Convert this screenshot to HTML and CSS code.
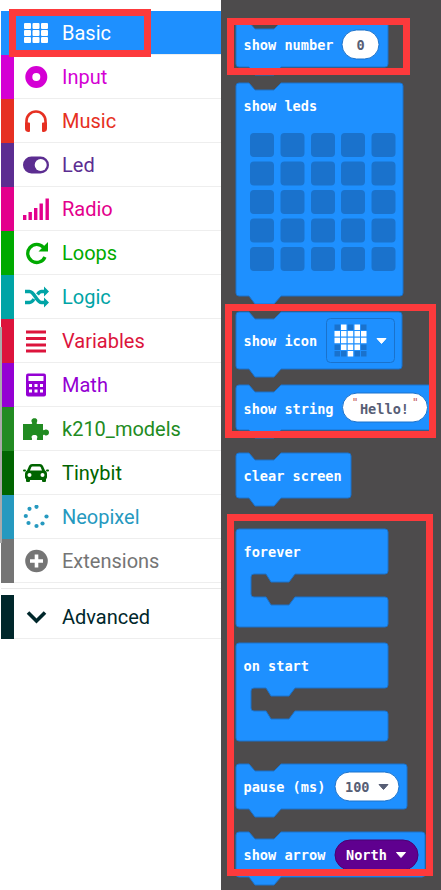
FILE: index.html
```html
<!DOCTYPE html>
<html lang="en">
<head>
    <meta charset="UTF-8">
    <title>Blocks</title>
    <link rel="stylesheet" href="styles.css">
</head>
<body>

<div class="toolbox">
    <div class="row row-basic">
        <span class="strip"></span>
        <div class="row-body">
            <svg class="icon" viewBox="0 0 28 24" fill="currentColor"><rect x="2" y="2" width="7" height="6" rx="1"/><rect x="10.5" y="2" width="7" height="6" rx="1"/><rect x="19" y="2" width="7" height="6" rx="1"/><rect x="2" y="9" width="7" height="6" rx="1"/><rect x="10.5" y="9" width="7" height="6" rx="1"/><rect x="19" y="9" width="7" height="6" rx="1"/><rect x="2" y="16" width="7" height="6" rx="1"/><rect x="10.5" y="16" width="7" height="6" rx="1"/><rect x="19" y="16" width="7" height="6" rx="1"/></svg>
            <span class="label">Basic</span>
        </div>
    </div>
    <div class="row row-input">
        <span class="strip"></span>
        <div class="row-body">
            <svg class="icon" viewBox="0 0 28 24"><circle cx="14.3" cy="12" r="7.5" fill="none" stroke="currentColor" stroke-width="7"/></svg>
            <span class="label">Input</span>
        </div>
    </div>
    <div class="row row-music">
        <span class="strip"></span>
        <div class="row-body">
            <svg class="icon" viewBox="0 0 28 24" fill="currentColor"><path d="M4.500 17v-5a9.500 9.500 0 0 1 19 0v5" fill="none" stroke="currentColor" stroke-width="2.600"/><path d="M3 13.500h4a1 1 0 0 1 1 1V22a1 1 0 0 1-1 1H6a3.500 3.500 0 0 1-3-3.500zM25 13.500h-4a1 1 0 0 0-1 1V22a1 1 0 0 0 1 1h1a3.500 3.500 0 0 0 3-3.500z"/></svg>
            <span class="label">Music</span>
        </div>
    </div>
    <div class="row row-led">
        <span class="strip"></span>
        <div class="row-body">
            <svg class="icon" viewBox="0 0 28 24"><rect x="1" y="3.500" width="26" height="17" rx="8.500" fill="currentColor"/><circle cx="18.700" cy="12" r="6" fill="#fff"/></svg>
            <span class="label">Led</span>
        </div>
    </div>
    <div class="row row-radio">
        <span class="strip"></span>
        <div class="row-body">
            <svg class="icon" viewBox="0 0 28 24" fill="currentColor"><rect x="1" y="18" width="3.400" height="5"/><rect x="6.500" y="15" width="3.400" height="8"/><rect x="12" y="11" width="3.400" height="12"/><rect x="17.500" y="6.500" width="3.400" height="16.500"/><rect x="23.500" y="1.500" width="3.400" height="21.500"/></svg>
            <span class="label">Radio</span>
        </div>
    </div>
    <div class="row row-loops">
        <span class="strip"></span>
        <div class="row-body">
            <svg class="icon" viewBox="0 0 28 24" fill="currentColor"><path d="M21.500 6.500A9 9 0 1 0 23 16" fill="none" stroke="currentColor" stroke-width="3.300"/><path d="M26 1v9.500H16.500z"/></svg>
            <span class="label">Loops</span>
        </div>
    </div>
    <div class="row row-logic">
        <span class="strip"></span>
        <div class="row-body">
            <svg class="icon" viewBox="0 0 28 24" fill="currentColor"><path d="M3 6.500h4.500c5 0 7 11 12 11H23M3 17.500h4.500c2 0 3.500-1.800 4.500-3.500M15.500 9.500c1-1.500 2.300-3 4-3H23" fill="none" stroke="currentColor" stroke-width="3.400"/><path d="M22 1.500l5 5-5 5zM22 12.500l5 5-5 5z"/></svg>
            <span class="label">Logic</span>
        </div>
    </div>
    <div class="row row-variables">
        <span class="strip"></span>
        <div class="row-body">
            <svg class="icon" viewBox="0 0 28 24" fill="currentColor"><rect x="4" y="1.500" width="20" height="3"/><rect x="4" y="8" width="20" height="3"/><rect x="4" y="14.500" width="20" height="3"/><rect x="4" y="20.500" width="20" height="3"/></svg>
            <span class="label">Variables</span>
        </div>
    </div>
    <div class="row row-math">
        <span class="strip"></span>
        <div class="row-body">
            <svg class="icon" viewBox="0 0 28 24"><rect x="4" y="0.500" width="20" height="23" rx="2" fill="currentColor"/><rect x="6.500" y="3" width="15" height="5" fill="#fff"/><g fill="#fff"><rect x="7" y="11" width="3" height="3"/><rect x="12.500" y="11" width="3" height="3"/><rect x="18" y="11" width="3" height="3"/><rect x="7" y="16.500" width="3" height="3"/><rect x="12.500" y="16.500" width="3" height="3"/><rect x="18" y="16.500" width="3" height="3"/></g></svg>
            <span class="label">Math</span>
        </div>
    </div>
    <div class="row row-models">
        <span class="strip"></span>
        <div class="row-body">
            <svg class="icon" viewBox="0 0 28 24" fill="currentColor"><path d="M1 7h8.500c1 0 .8-1.200.2-2-.6-1-.4-3.800 2.800-3.800S15.500 4 15 5c-.5.800-.6 2 .3 2H21v5.500c0 1 1.200.8 2 .3 1-.6 4-.4 4 2.700s-3 3.300-4 2.700c-.8-.5-2-.7-2 .3V23h-5.500c-1 0-.8-1.200-.3-2 .5-1 .3-3-2.700-3s-3.200 2-2.700 3c.4.800.6 2-.3 2H1z"/></svg>
            <span class="label">k210_models</span>
        </div>
    </div>
    <div class="row row-tinybit">
        <span class="strip"></span>
        <div class="row-body">
            <svg class="icon" viewBox="0 0 28 24"><path d="M3 16v-3c0-2 1-3 2-3.500L7 5c.6-1.300 1.800-2 3-2h8c1.200 0 2.400.7 3 2l2 4.500c1 .5 2 1.500 2 3.500v3c0 1-.5 1.700-1 2v2a1 1 0 0 1-1 1h-2a1 1 0 0 1-1-1v-1H8v1a1 1 0 0 1-1 1H5a1 1 0 0 1-1-1v-2c-.5-.3-1-1-1-2z" fill="currentColor"/><path d="M8 9.500l1.400-3.500c.2-.4.500-.6 1-.6h7.200c.5 0 .8.200 1 .6L20 9.500z" fill="#fff"/><circle cx="7.500" cy="14" r="2" fill="#fff"/><circle cx="20.500" cy="14" r="2" fill="#fff"/><rect x="1" y="8.500" width="3" height="2" rx="1" fill="currentColor"/><rect x="24" y="8.500" width="3" height="2" rx="1" fill="currentColor"/></svg>
            <span class="label">Tinybit</span>
        </div>
    </div>
    <div class="row row-neopixel">
        <span class="strip"></span>
        <div class="row-body">
            <svg class="icon" viewBox="0 0 28 24" fill="currentColor"><circle cx="14.500" cy="1.800" r="2.100"/><circle cx="7.500" cy="3.800" r="2.100"/><circle cx="3.800" cy="11" r="2.100"/><circle cx="6.500" cy="18" r="2.100"/><circle cx="14.500" cy="21" r="2.100"/><circle cx="20.500" cy="18.500" r="2.100"/><circle cx="24.500" cy="11.500" r="2.100"/></svg>
            <span class="label">Neopixel</span>
        </div>
    </div>
    <div class="row row-extensions">
        <span class="strip"></span>
        <div class="row-body">
            <svg class="icon" viewBox="0 0 28 24"><circle cx="14.500" cy="12" r="11.300" fill="currentColor"/><path d="M14.500 5.500v13M8 12h13" stroke="#fff" stroke-width="3.600"/></svg>
            <span class="label">Extensions</span>
        </div>
    </div>
    <div class="divider"></div>
    <div class="row row-advanced">
        <span class="strip"></span>
        <div class="row-body">
            <svg class="icon" viewBox="0 0 28 24"><path d="M6 7.500l8.500 8.500L23 7.500" fill="none" stroke="currentColor" stroke-width="3.600"/></svg>
            <span class="label">Advanced</span>
        </div>
    </div>
</div>

<div class="flyout">
    <svg class="block" width="152" height="53">
        <path class="shape" d="M0 3a3 3 0 0 1 3-3H13l6 7H38l7-7H149a3 3 0 0 1 3 3V42a3 3 0 0 1-3 3H45l-7 8H19l-6-8H3a3 3 0 0 1-3-3z"/>
        <text class="word" x="7.500" y="28">show number</text>
        <rect class="field" x="106" y="8" width="37" height="29" rx="14.500"/>
        <text class="field-text" x="124.500" y="28" text-anchor="middle">0</text>
    </svg>

    <svg class="block" width="167" height="221">
        <path class="shape" d="M0 3a3 3 0 0 1 3-3H13l6 7H38l7-7H164a3 3 0 0 1 3 3V210a3 3 0 0 1-3 3H45l-7 8H19l-6-8H3a3 3 0 0 1-3-3z"/>
        <text class="word" x="7.500" y="27.500">show leds</text>
        <g class="led-off">
            <rect x="14" y="50" width="24" height="24" rx="4"/><rect x="44.500" y="50" width="24" height="24" rx="4"/><rect x="75" y="50" width="24" height="24" rx="4"/><rect x="105" y="50" width="24" height="24" rx="4"/><rect x="135.500" y="50" width="24" height="24" rx="4"/>
            <rect x="14" y="78.500" width="24" height="24" rx="4"/><rect x="44.500" y="78.500" width="24" height="24" rx="4"/><rect x="75" y="78.500" width="24" height="24" rx="4"/><rect x="105" y="78.500" width="24" height="24" rx="4"/><rect x="135.500" y="78.500" width="24" height="24" rx="4"/>
            <rect x="14" y="107" width="24" height="24" rx="4"/><rect x="44.500" y="107" width="24" height="24" rx="4"/><rect x="75" y="107" width="24" height="24" rx="4"/><rect x="105" y="107" width="24" height="24" rx="4"/><rect x="135.500" y="107" width="24" height="24" rx="4"/>
            <rect x="14" y="135.500" width="24" height="24" rx="4"/><rect x="44.500" y="135.500" width="24" height="24" rx="4"/><rect x="75" y="135.500" width="24" height="24" rx="4"/><rect x="105" y="135.500" width="24" height="24" rx="4"/><rect x="135.500" y="135.500" width="24" height="24" rx="4"/>
            <rect x="14" y="164" width="24" height="24" rx="4"/><rect x="44.500" y="164" width="24" height="24" rx="4"/><rect x="75" y="164" width="24" height="24" rx="4"/><rect x="105" y="164" width="24" height="24" rx="4"/><rect x="135.500" y="164" width="24" height="24" rx="4"/>
        </g>
    </svg>

    <svg class="block" width="166" height="65">
        <path class="shape" d="M0 3a3 3 0 0 1 3-3H13l6 7H38l7-7H163a3 3 0 0 1 3 3V54a3 3 0 0 1-3 3H45l-7 8H19l-6-8H3a3 3 0 0 1-3-3z"/>
        <text class="word" x="7.500" y="33.500">show icon</text>
        <rect class="icon-field" x="90.500" y="6.500" width="68" height="44" rx="4"/>
        <g class="mini-off">
            <rect x="98.500" y="12.500" width="5.500" height="5.500"/><rect x="111.700" y="12.500" width="5.500" height="5.500"/><rect x="125" y="12.500" width="5.500" height="5.500"/>
            <rect x="98.500" y="32.500" width="5.500" height="5.500"/><rect x="125" y="32.500" width="5.500" height="5.500"/>
            <rect x="98.500" y="39" width="5.500" height="5.500"/><rect x="105" y="39" width="5.500" height="5.500"/><rect x="118.500" y="39" width="5.500" height="5.500"/><rect x="125" y="39" width="5.500" height="5.500"/>
        </g>
        <g class="mini-on">
            <rect x="105" y="12.500" width="5.500" height="5.500"/><rect x="118.500" y="12.500" width="5.500" height="5.500"/>
            <rect x="98.500" y="19" width="5.500" height="5.500"/><rect x="105" y="19" width="5.500" height="5.500"/><rect x="111.700" y="19" width="5.500" height="5.500"/><rect x="118.500" y="19" width="5.500" height="5.500"/><rect x="125" y="19" width="5.500" height="5.500"/>
            <rect x="98.500" y="25.700" width="5.500" height="5.500"/><rect x="105" y="25.700" width="5.500" height="5.500"/><rect x="111.700" y="25.700" width="5.500" height="5.500"/><rect x="118.500" y="25.700" width="5.500" height="5.500"/><rect x="125" y="25.700" width="5.500" height="5.500"/>
            <rect x="105" y="32.500" width="5.500" height="5.500"/><rect x="111.700" y="32.500" width="5.500" height="5.500"/><rect x="118.500" y="32.500" width="5.500" height="5.500"/>
            <rect x="111.700" y="39" width="5.500" height="5.500"/>
        </g>
        <path class="arrow-white" d="M141 26.500h9l-4.500 5z"/>
    </svg>

    <svg class="block" width="196" height="53">
        <path class="shape" d="M0 3a3 3 0 0 1 3-3H13l6 7H38l7-7H193a3 3 0 0 1 3 3V42a3 3 0 0 1-3 3H45l-7 8H19l-6-8H3a3 3 0 0 1-3-3z"/>
        <text class="word" x="7.500" y="29">show string</text>
        <rect class="field" x="106.500" y="8" width="85" height="29" rx="14.500"/>
        <text class="quote" x="115.700" y="21">"</text>
        <text class="field-text" x="148.500" y="29" text-anchor="middle">Hello!</text>
        <text class="quote" x="176" y="21">"</text>
    </svg>

    <svg class="block block-spaced" width="115" height="53">
        <path class="shape" d="M0 3a3 3 0 0 1 3-3H13l6 7H38l7-7H112a3 3 0 0 1 3 3V42a3 3 0 0 1-3 3H45l-7 8H19l-6-8H3a3 3 0 0 1-3-3z"/>
        <text class="word" x="7.500" y="28">clear screen</text>
    </svg>

    <svg class="block block-group" width="152" height="98">
        <path class="shape" d="M0 3a3 3 0 0 1 3-3H149a3 3 0 0 1 3 3V42a3 3 0 0 1-3 3H59l-6 8H35l-5-8H18a3 3 0 0 0-3 3V65a3 3 0 0 0 3 3H30l5 8H53l6-8H149a3 3 0 0 1 3 3V95a3 3 0 0 1-3 3H3a3 3 0 0 1-3-3z"/>
        <text class="word" x="7.500" y="28">forever</text>
    </svg>

    <svg class="block block-hat" width="152" height="98">
        <path class="shape" d="M0 3a3 3 0 0 1 3-3H149a3 3 0 0 1 3 3V42a3 3 0 0 1-3 3H59l-6 8H35l-5-8H18a3 3 0 0 0-3 3V65a3 3 0 0 0 3 3H30l5 8H53l6-8H149a3 3 0 0 1 3 3V95a3 3 0 0 1-3 3H3a3 3 0 0 1-3-3z"/>
        <text class="word" x="7.500" y="28">on start</text>
    </svg>

    <svg class="block block-group" width="171" height="53">
        <path class="shape" d="M0 3a3 3 0 0 1 3-3H13l6 7H38l7-7H168a3 3 0 0 1 3 3V42a3 3 0 0 1-3 3H45l-7 8H19l-6-8H3a3 3 0 0 1-3-3z"/>
        <text class="word" x="7.500" y="28">pause (ms)</text>
        <rect class="field" x="99" y="8" width="64" height="29" rx="14.500"/>
        <text class="field-text" x="109" y="28">100</text>
        <path class="arrow-dark" d="M143 20.500h9l-4.500 5z"/>
    </svg>

    <svg class="block block-spaced" width="189" height="53">
        <path class="shape" d="M0 3a3 3 0 0 1 3-3H13l6 7H38l7-7H186a3 3 0 0 1 3 3V42a3 3 0 0 1-3 3H45l-7 8H19l-6-8H3a3 3 0 0 1-3-3z"/>
        <text class="word" x="7.500" y="28">show arrow</text>
        <rect class="field-purple" x="99" y="8" width="83" height="30" rx="15"/>
        <text class="word" x="110" y="28">North</text>
        <path class="arrow-white" d="M160.500 20.500h9l-4.500 5z"/>
    </svg>
</div>

<!-- red marks and the grey edge drawn over the screenshot -->
<div class="edge"></div>
<div class="mark mark-basic"></div>
<div class="mark mark-number"></div>
<div class="mark mark-show"></div>
<div class="mark mark-loops"></div>

</body>
</html>
```

FILE: styles.css
```css
html, body {
    margin: 0;
    padding: 0;
}
body {
    display: flex;
    width: 441px;
    height: 890px;
    overflow: hidden;
    position: relative;
    background: #fff;
    font-family: Roboto, Arial, sans-serif;
}

/* toolbox */
.toolbox {
    width: 220px;
    margin-left: 1px;
    padding-top: 11px;
    flex-shrink: 0;
    box-sizing: border-box;
}
.row {
    display: flex;
    height: 44px;
}
.strip {
    width: 13px;
    background: currentColor;
    flex-shrink: 0;
}
.row-body {
    flex: 1;
    display: flex;
    align-items: center;
    gap: 12px;
    padding-left: 8px;
    border-bottom: 1px solid #eee;
}
.icon {
    width: 28px;
    height: 24px;
    flex-shrink: 0;
}
.label {
    font-size: 20px;
}
.divider {
    height: 1px;
    margin: 5px 0 6px;
    background: #e8e8e8;
}
.row-basic { color: #1e90ff; }
.row-basic .row-body {
    background: #1e90ff;
    color: #fff;
}
.row-input { color: #d400d4; }
.row-music { color: #e63022; }
.row-led { color: #5c2d91; }
.row-radio { color: #e3008c; }
.row-loops { color: #00aa00; }
.row-logic { color: #00a4a6; }
.row-variables { color: #dc143c; }
.row-math { color: #9400d3; }
.row-models { color: #228b22; }
.row-tinybit { color: #006400; }
.row-neopixel { color: #2699bf; }
.row-extensions { color: #757575; }
.row-advanced { color: #00272b; }

.edge {
    position: absolute;
    left: 0;
    top: 327px;
    width: 2px;
    height: 216px;
    background: #aaa;
}

/* flyout */
.flyout {
    flex: 1;
    display: flex;
    flex-direction: column;
    align-items: flex-start;
    gap: 8px;
    padding: 22px 0 0 15px;
    background: #4d4b4c;
}
.block {
    display: block;
    overflow: visible;
    flex-shrink: 0;
}
.block-spaced { margin-top: 7px; }
.block-group { margin-top: 15px; }
.block-hat { margin-top: 8px; }
.shape {
    fill: #1e90ff;
    stroke: #1a72cc;
    stroke-width: 1;
    stroke-linejoin: round;
}
.word, .field-text {
    font-family: "DejaVu Sans Mono", monospace;
    font-size: 13.6px;
    font-weight: bold;
}
.word { fill: #fff; }
.field-text { fill: #575e75; }
.quote {
    font-family: "DejaVu Sans Mono", monospace;
    font-size: 11px;
    fill: #c05050;
}
.field {
    fill: #fff;
    stroke: #1a72cc;
    stroke-width: 1;
}
.field-purple {
    fill: #5f008f;
    stroke: #4c0072;
    stroke-width: 1;
}
.icon-field {
    fill: #1e90ff;
    stroke: #1a72cc;
    stroke-width: 1;
}
.led-off rect { fill: #1a72cc; }
.mini-off rect { fill: #1a72cc; }
.mini-on rect { fill: #fff; }
.arrow-white {
    fill: #fff;
    stroke: #fff;
    stroke-linejoin: round;
}
.arrow-dark {
    fill: #575e75;
    stroke: #575e75;
    stroke-linejoin: round;
}

/* red marks */
.mark {
    position: absolute;
    box-sizing: border-box;
    border: 7px solid #fd3a3c;
}
.mark-basic { left: 9px; top: 9px; width: 142px; height: 48px; }
.mark-number { left: 227px; top: 18px; width: 183px; height: 57px; }
.mark-show { left: 225px; top: 304px; width: 211px; height: 134px; }
.mark-loops { left: 227px; top: 514px; width: 206px; height: 362px; }
```
